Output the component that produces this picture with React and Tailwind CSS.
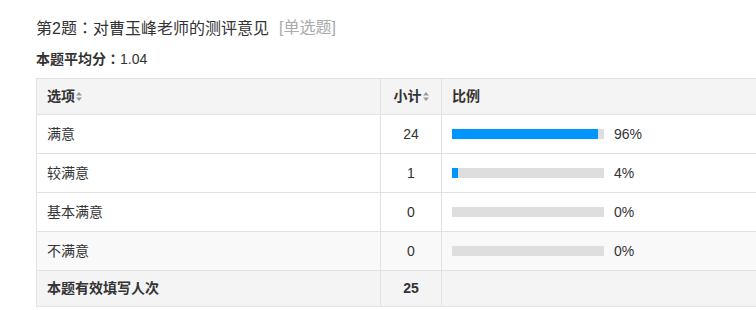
import React from "react";

const font = { fontFamily: '"Liberation Sans", Arial, "Noto Sans CJK SC", sans-serif' };

function Colon() {
  return <span style={{ fontFamily: '"Noto Sans CJK TC", sans-serif' }}>：</span>;
}

function SortIcon() {
  return (
    <svg width="6" height="9" viewBox="0 0 6 9" className="ml-[1px] shrink-0">
      <path d="M3 0 L6 3.5 L0 3.5 Z" fill="#9a9a9a" />
      <path d="M0 5.5 L6 5.5 L3 9 Z" fill="#9a9a9a" />
    </svg>
  );
}

const rows = [
  { label: "满意", count: 24, pct: 96, bg: "bg-white" },
  { label: "较满意", count: 1, pct: 4, bg: "bg-white" },
  { label: "基本满意", count: 0, pct: 0, bg: "bg-white" },
  { label: "不满意", count: 0, pct: 0, bg: "bg-[#f9f9f9]" },
];

export default function App() {
  return (
    <div className="w-[756px] h-[310px] overflow-hidden bg-white text-[#333]" style={font}>
      <div className="pl-[36px] pt-[16px]">
        <div className="h-[24px] flex items-center text-[16px]">
          <span>第2题<Colon />对曹玉峰老师的测评意见</span>
          <span className="ml-[10px] text-[#aaa]">[单选题]</span>
        </div>
        <div className="mt-[9px] h-[20px] flex items-center text-[14px]">
          <span className="font-bold">本题平均分<Colon /></span>
          <span>1.04</span>
        </div>
        <div className="mt-[9px] w-[740px] border-l border-t border-[#e2e2e2] text-[14px]">
          <div className="flex h-[36px] border-b border-[#e2e2e2] bg-[#f4f4f4] font-bold">
            <div className="w-[344px] border-r border-[#e2e2e2] pl-[10px] flex items-center">
              <span>选项</span>
              <SortIcon />
            </div>
            <div className="w-[61px] border-r border-[#e2e2e2] flex items-center justify-center">
              <span>小计</span>
              <SortIcon />
            </div>
            <div className="flex-1 pl-[10px] flex items-center">比例</div>
          </div>
          {rows.map((r) => (
            <div key={r.label} className={`flex h-[39px] border-b border-[#e2e2e2] ${r.bg}`}>
              <div className="w-[344px] border-r border-[#e2e2e2] pl-[10px] flex items-center">{r.label}</div>
              <div className="w-[61px] border-r border-[#e2e2e2] flex items-center justify-center">{r.count}</div>
              <div className="flex-1 pl-[10px] flex items-center">
                <div className="w-[152px] h-[10px] bg-[#dedede]">
                  <div className="h-full bg-[#0095ff]" style={{ width: `${r.pct}%` }} />
                </div>
                <span className="ml-[10px]">{r.pct}%</span>
              </div>
            </div>
          ))}
          <div className="flex h-[36px] border-b border-[#e2e2e2] bg-[#f4f4f4] font-bold">
            <div className="w-[344px] border-r border-[#e2e2e2] pl-[10px] flex items-center">本题有效填写人次</div>
            <div className="w-[61px] border-r border-[#e2e2e2] flex items-center justify-center">25</div>
            <div className="flex-1" />
          </div>
        </div>
      </div>
    </div>
  );
}
